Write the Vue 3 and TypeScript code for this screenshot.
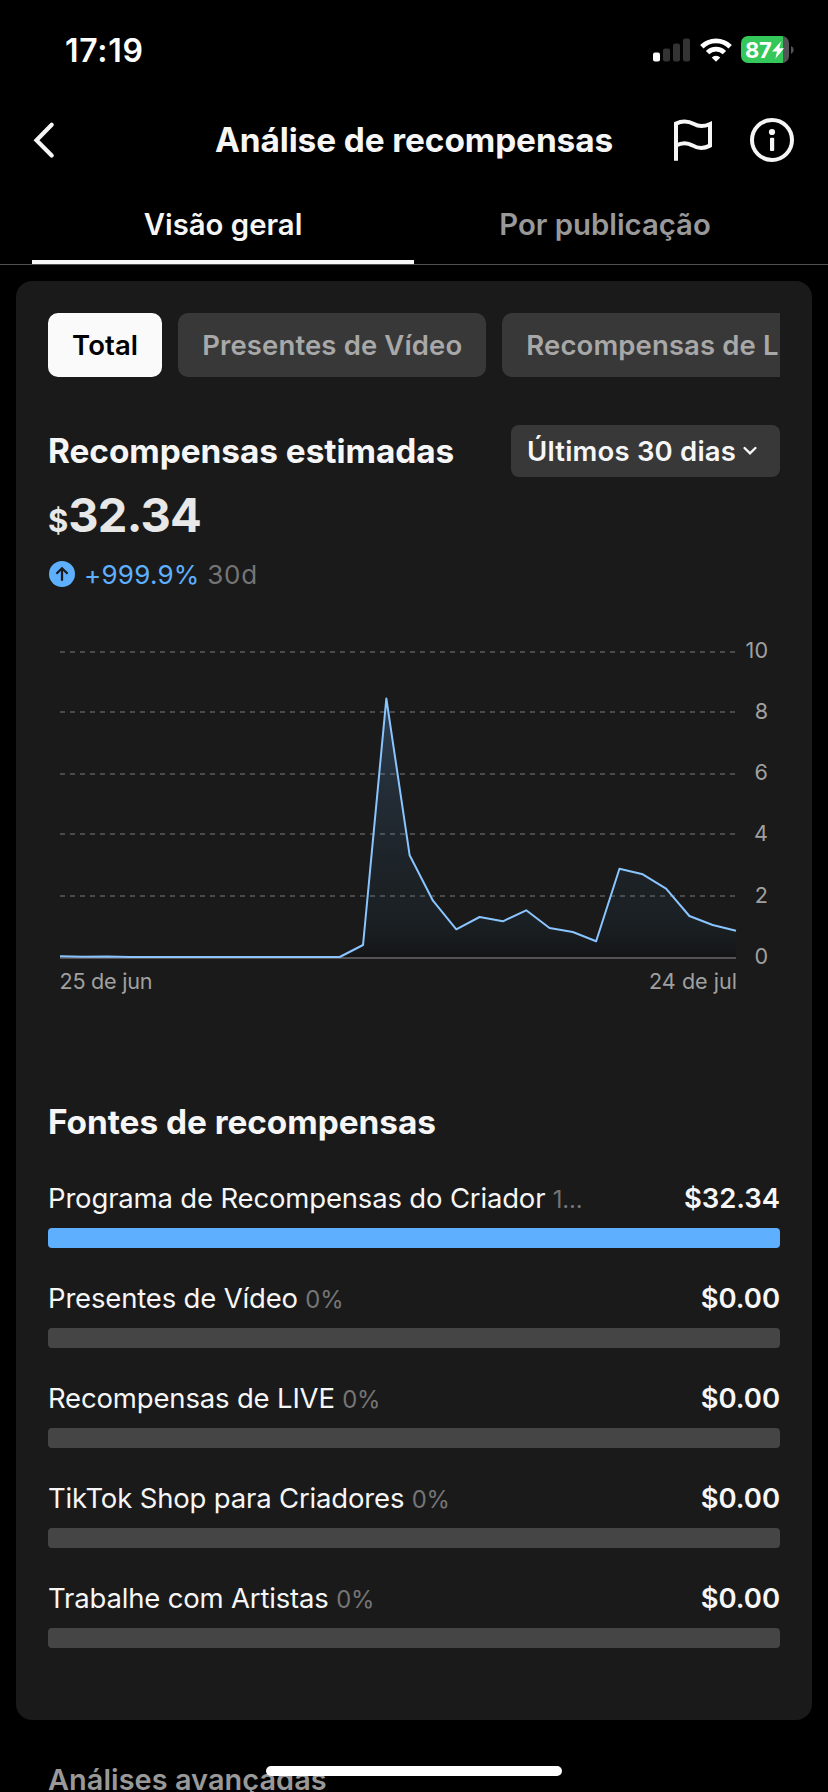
<script setup lang="ts">
interface Source {
  name: string
  share: string
  amount: string
  percent: number
}

const chips = ['Total', 'Presentes de Vídeo', 'Recompensas de LIVE']

const sources: Source[] = [
  { name: 'Programa de Recompensas do Criador', share: '1...', amount: '$32.34', percent: 100 },
  { name: 'Presentes de Vídeo', share: '0%', amount: '$0.00', percent: 0 },
  { name: 'Recompensas de LIVE', share: '0%', amount: '$0.00', percent: 0 },
  { name: 'TikTok Shop para Criadores', share: '0%', amount: '$0.00', percent: 0 },
  { name: 'Trabalhe com Artistas', share: '0%', amount: '$0.00', percent: 0 },
]

// Chart geometry, in the SVG's own units
const plotLeft = 12
const plotRight = 688
const ticks = [
  { label: '10', y: 12, base: 18.3 },
  { label: '8', y: 72, base: 79 },
  { label: '6', y: 134, base: 140.3 },
  { label: '4', y: 194, base: 201 },
  { label: '2', y: 256, base: 263 },
]
const heights = [
  316.3, 316.8, 316.4, 317, 317, 317, 317, 317, 317, 317, 317, 317, 317,
  305, 58.5, 215.3, 260.7, 289.3, 277, 281.3, 270.3, 288, 292, 301.3,
  228.7, 234.3, 248.7, 276, 285, 290.7,
]
const step = (plotRight - plotLeft) / (heights.length - 1)
const line = heights.map((y, i) => `${(plotLeft + i * step).toFixed(2)},${y}`).join(' ')
const area = `${plotLeft},317 ${line} ${plotRight},317`
</script>

<template>
  <div class="screen">
    <div class="status">
      <span class="time">17:19</span>
      <div class="status-icons">
        <svg class="signal" width="37" height="24" viewBox="0 0 37 24">
          <rect x="0" y="14.5" width="7" height="9" rx="2" fill="#fff" />
          <rect x="10" y="10.5" width="7" height="13" rx="2" fill="#333" />
          <rect x="20" y="5.5" width="7" height="18" rx="2" fill="#333" />
          <rect x="30" y="0.5" width="7" height="23" rx="2" fill="#333" />
        </svg>
        <svg class="wifi" width="32" height="24" viewBox="0 0 32 24">
          <g fill="none" stroke="#fff" stroke-width="4.8">
            <path d="M1.8 8.8a20.2 20.2 0 0 1 28.4 0" />
            <path d="M7.6 14.6a12 12 0 0 1 16.8 0" />
          </g>
          <path d="M11.7 19.5a6.1 6.1 0 0 1 8.6 0L16 23.8z" fill="#fff" />
        </svg>
        <div class="battery">
          <div class="battery-body">
            <span>87</span>
            <svg width="12" height="18" viewBox="0 0 12 18"><path d="M9.2 0.3 0 10.4h5L3.4 17.7 12 7.3H7.2z" fill="#fff" /></svg>
          </div>
          <svg width="3" height="8" viewBox="0 0 3 8"><path d="M0 0a4.3 4.3 0 0 1 0 8z" fill="#545456" /></svg>
        </div>
      </div>
    </div>

    <header class="header">
      <svg width="24" height="40" viewBox="0 0 24 40"><path d="M19.7 4.8 4.5 20.2l15.2 15.3" fill="none" stroke="#f6f6f6" stroke-width="4.2" stroke-linecap="round" /></svg>
      <h1>Análise de recompensas</h1>
      <div class="actions">
        <svg width="40" height="44" viewBox="0 0 40 44">
          <path d="M4 42.8V5.6C10 2.6 16 2.8 22 6.1C27 8.9 32 8.7 38 6V27.6C32 30.7 26 30.8 20.5 27.4C15 24.2 9.5 24.6 4 27.5" fill="none" stroke="#f6f6f6" stroke-width="4" />
        </svg>
        <svg width="44" height="44" viewBox="0 0 44 44">
          <circle cx="22" cy="22" r="20" fill="none" stroke="#f6f6f6" stroke-width="4" />
          <circle cx="22" cy="14" r="3.1" fill="#f6f6f6" />
          <rect x="20" y="19.8" width="4.2" height="13.2" rx="1" fill="#f6f6f6" />
        </svg>
      </div>
    </header>

    <nav class="tabs">
      <div class="tab active">Visão geral</div>
      <div class="tab">Por publicação</div>
    </nav>

    <main class="card">
      <div class="chips">
        <div v-for="(chip, i) in chips" :key="chip" class="chip" :class="{ selected: i === 0 }">{{ chip }}</div>
      </div>

      <div class="heading">
        <h2>Recompensas estimadas</h2>
        <div class="range">
          <span>Últimos 30 dias</span>
          <svg width="14" height="10" viewBox="0 0 14 10"><path d="M1.6 2 7 7.4 12.4 2" fill="none" stroke="#f6f6f6" stroke-width="2.4" stroke-linecap="round" /></svg>
        </div>
      </div>

      <div class="total"><span class="currency">$</span>32.34</div>

      <div class="change">
        <svg width="26" height="26" viewBox="0 0 26 26">
          <circle cx="13" cy="13" r="13" fill="#5eb0ff" />
          <path d="M13 19.8V8M7.4 12.8 13 7.2l5.6 5.6" fill="none" stroke="#1a1a1a" stroke-width="2.2" />
        </svg>
        <span class="delta">+999.9%</span>
        <span class="period">30d</span>
      </div>

      <svg class="chart" width="732" height="360" viewBox="0 0 732 360">
        <defs>
          <linearGradient id="area-fill" gradientUnits="userSpaceOnUse" x1="0" y1="58" x2="0" y2="317">
            <stop offset="0" stop-color="#64b4ff" stop-opacity="0.26" />
            <stop offset="0.4" stop-color="#5a9ce6" stop-opacity="0.13" />
            <stop offset="0.75" stop-color="#3078a8" stop-opacity="0.07" />
            <stop offset="1" stop-color="#000" stop-opacity="0.22" />
          </linearGradient>
        </defs>
        <line v-for="t in ticks" :key="t.label" :x1="plotLeft" :x2="plotRight" :y1="t.y" :y2="t.y" stroke="#4a4a4a" stroke-width="2" stroke-dasharray="5 5" />
        <polygon :points="area" fill="url(#area-fill)" />
        <line :x1="plotLeft" :x2="plotRight" y1="318" y2="318" stroke="#545254" stroke-width="2" />
        <polyline :points="line" fill="none" stroke="#8ac5ff" stroke-width="2" stroke-linejoin="round" />
        <text v-for="t in ticks" :key="t.label" x="720" :y="t.base" text-anchor="end">{{ t.label }}</text>
        <text x="720" y="324" text-anchor="end">0</text>
        <text x="11.5" y="349" class="start">25 de jun</text>
        <text x="689" y="349" text-anchor="end">24 de jul</text>
      </svg>

      <h2 class="sources-title">Fontes de recompensas</h2>
      <div v-for="s in sources" :key="s.name" class="source">
        <div class="source-row">
          <span class="source-name">{{ s.name }}<span class="share">{{ s.share }}</span></span>
          <span class="amount">{{ s.amount }}</span>
        </div>
        <div class="track"><div class="fill" :style="{ width: s.percent + '%' }"></div></div>
      </div>
    </main>

    <h2 class="advanced">Análises avançadas</h2>
    <div class="home-indicator"></div>
  </div>
</template>

<style>
html,
body {
  margin: 0;
  background: #000;
}
</style>

<style scoped>
.screen {
  position: relative;
  width: 828px;
  height: 1792px;
  overflow: hidden;
  background: #000;
  color: #f6f6f6;
  font-family: Inter, 'Liberation Sans', sans-serif;
  white-space: nowrap;
}
svg {
  display: block;
  flex: none;
}
h1,
h2 {
  margin: 0;
  font-size: 33.4px;
  font-weight: 700;
  letter-spacing: -0.05px;
}
.status {
  display: flex;
  justify-content: space-between;
  align-items: center;
  height: 99px;
  padding: 0 34px 0 65px;
  box-sizing: border-box;
}
.time {
  padding-top: 1px;
  color: #fff;
  font-size: 32px;
  font-weight: 600;
  letter-spacing: 0.7px;
}
.status-icons {
  display: flex;
  align-items: center;
}
.wifi {
  margin: 0 9.5px 0 9.5px;
}
.battery {
  display: flex;
  align-items: center;
  gap: 2px;
}
.battery-body {
  display: flex;
  align-items: center;
  gap: 1px;
  width: 48px;
  height: 27px;
  padding-left: 4px;
  box-sizing: border-box;
  border-radius: 7px;
  background: linear-gradient(90deg, #34c759 42px, #545456 42px);
  color: #fff;
  font-size: 22px;
  font-weight: 700;
  letter-spacing: -0.4px;
}
.header {
  display: grid;
  grid-template-columns: 108px 1fr 108px;
  align-items: center;
  height: 82px;
  padding: 0 32px;
}
.header h1 {
  text-align: center;
  letter-spacing: -0.1px;
}
.actions {
  display: flex;
  align-items: center;
  justify-content: flex-end;
  gap: 38px;
  margin-right: 2px;
}
.tabs {
  display: flex;
  height: 83px;
  padding: 0 32px;
  border-bottom: 1px solid #505050;
}
.tab {
  flex: 1;
  height: 83px;
  box-sizing: border-box;
  border-bottom: 4px solid transparent;
  line-height: 87px;
  text-align: center;
  color: #999;
  font-size: 29.3px;
  font-weight: 600;
}
.tab.active {
  color: #f6f6f6;
  border-color: #f6f6f6;
}
.card {
  height: 1439px;
  margin: 16px 16px 0;
  padding: 32px;
  box-sizing: border-box;
  border-radius: 16px;
  background: #1a1a1a;
}
.chips {
  display: flex;
  gap: 16px;
  overflow: hidden;
}
.chip {
  flex: none;
  padding: 0 24px;
  border-radius: 10px;
  background: #383838;
  color: #a8a8a8;
  font-size: 27.5px;
  font-weight: 600;
  letter-spacing: 0.12px;
  line-height: 64px;
}
.chip.selected {
  background: #fafafa;
  color: #000;
}
.heading {
  display: flex;
  justify-content: space-between;
  align-items: center;
  margin-top: 48px;
}
.range {
  display: flex;
  align-items: center;
  justify-content: space-between;
  width: 269px;
  height: 52px;
  padding: 0 23px 0 16px;
  box-sizing: border-box;
  border-radius: 8px;
  background: #383838;
  font-size: 27.5px;
  font-weight: 600;
  letter-spacing: 0.2px;
}
.total {
  height: 64px;
  margin-top: 6px;
  line-height: 64px;
  color: #e8e8e8;
  font-size: 47px;
  font-weight: 700;
  letter-spacing: -0.8px;
}
.currency {
  font-size: 31px;
  font-weight: 700;
  letter-spacing: 0;
}
.change {
  display: flex;
  align-items: center;
  height: 26px;
  margin: 14px 0 0 1px;
  font-size: 26px;
}
.delta {
  margin-left: 9px;
  color: #5eb0ff;
  letter-spacing: 0.25px;
}
.period {
  margin-left: 7.5px;
  color: #757575;
  letter-spacing: 0.8px;
}
.chart {
  margin-top: 53px;
}
.chart text {
  fill: #a0a0a0;
  font-size: 21.6px;
}
.chart .start {
  letter-spacing: -0.25px;
}
.sources-title {
  margin-top: 100px;
  line-height: 44px;
}
.source {
  height: 100px;
  padding-top: 34px;
  box-sizing: border-box;
}
.source-row {
  display: flex;
  justify-content: space-between;
  height: 40px;
  line-height: 40px;
  font-size: 27.5px;
}
.source-name {
  letter-spacing: -0.17px;
}
.share {
  margin-left: 7.5px;
  color: #757575;
  font-size: 23.8px;
}
.amount {
  font-weight: 600;
  letter-spacing: -0.05px;
}
.track {
  height: 20px;
  margin-top: 10px;
  overflow: hidden;
  border-radius: 4px;
  background: #454545;
}
.fill {
  height: 100%;
  background: #5eb0ff;
}
.advanced {
  margin: 38px 0 0 48px;
  color: #999;
  font-size: 28.9px;
  font-weight: 600;
  letter-spacing: 0.05px;
  line-height: 44px;
}
.home-indicator {
  position: absolute;
  left: 266px;
  bottom: 16px;
  width: 296px;
  height: 10px;
  border-radius: 5px;
  background: #fff;
}
</style>
